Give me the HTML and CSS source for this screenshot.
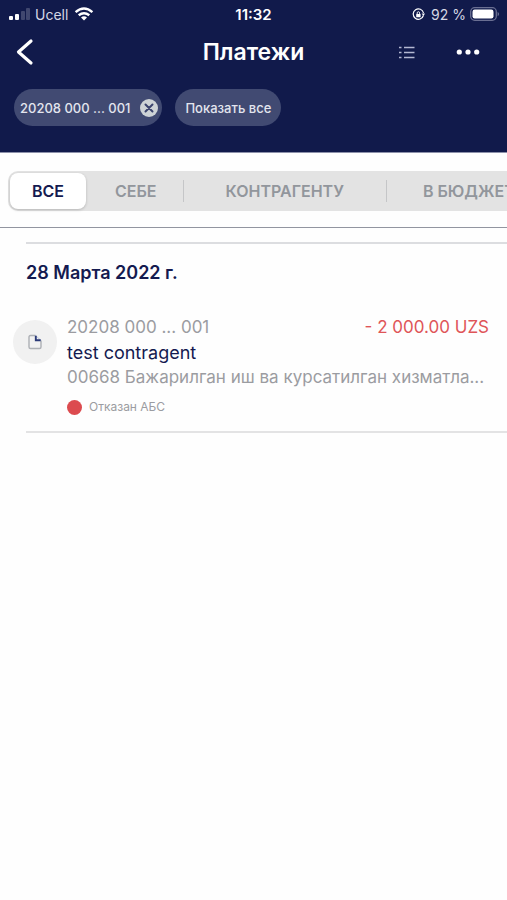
FILE: index.html
```html
<!DOCTYPE html>
<html lang="ru">
<head>
<meta charset="utf-8">
<meta name="viewport" content="width=device-width, initial-scale=1">
<title>Платежи</title>
<link rel="stylesheet" href="styles.css">
</head>
<body>
<header class="header">
  <div class="status">
    <div class="status-left">
      <svg width="22" height="12" viewBox="0 0 22 12" fill="#fff" aria-hidden="true">
        <rect x="0" y="8" width="4" height="4" rx="1"/>
        <rect x="6" y="6" width="4" height="6" rx="1"/>
        <rect x="12" y="3" width="4" height="9" rx="1" opacity=".2"/>
        <rect x="17" y="0" width="4" height="12" rx="1" opacity=".2"/>
      </svg>
      <span>Ucell</span>
      <svg width="20" height="14" viewBox="0 0 20 14" fill="none" stroke="#fff" stroke-width="2.4" aria-hidden="true">
        <path d="M1.6 5.2Q10-2 18.400 5.200M4.700 8.300Q10 4 15.300 8.300"/>
        <path d="M7 10.400Q10 8.300 13 10.400L10 13.500Z" fill="#fff" stroke="none"/>
      </svg>
    </div>
    <time class="clock">11:32</time>
    <div class="status-right">
      <svg width="13" height="13" viewBox="0 0 13 13" fill="none" stroke="#fff" stroke-width="1.2" aria-hidden="true">
        <path d="M11.400 7.500A5.200 5.200 0 1 1 11.500 5"/>
        <path d="M9.600 5.500h3.400l-1.500 2.600z" fill="#fff" stroke="none"/>
        <rect x="4.200" y="6" width="4.400" height="3.200" rx=".5" fill="#fff" stroke="none"/>
        <path d="M5.200 6V4.900a1.200 1.200 0 0 1 2.400 0V6" stroke-width=".9"/>
      </svg>
      <span>92 %</span>
      <svg width="30" height="14" viewBox="0 0 30 14" aria-hidden="true">
        <rect x=".7" y=".7" width="25.600" height="12.600" rx="4" fill="none" stroke="#6a6f92" stroke-width="1.300"/>
        <rect x="2.500" y="2.500" width="21" height="9" rx="2.200" fill="#fff"/>
        <path d="M27.600 4.700q3 2.300 0 4.600z" fill="#6a6f92"/>
      </svg>
    </div>
  </div>
  <div class="nav">
    <div class="nav-side">
      <button class="icon-button" type="button" aria-label="Назад">
        <svg width="18" height="28" viewBox="0 0 18 28" fill="none" stroke="#fff" stroke-width="3.200" stroke-linecap="round" stroke-linejoin="round"><path d="M15 3L2.500 14L15 25"/></svg>
      </button>
    </div>
    <h1 class="title">Платежи</h1>
    <div class="nav-side nav-actions">
      <button class="icon-button" type="button" aria-label="Список">
        <svg width="16" height="14" viewBox="0 0 16 14" stroke="#b4b8d2" stroke-width="1.300"><path d="M0 2.500h2.500M5 2.500h10.500M0 7.500h2.500M5 7.500h10.500M0 12.500h2.500M5 12.500h10.500"/></svg>
      </button>
      <button class="icon-button" type="button" aria-label="Ещё">
        <svg width="24" height="6" viewBox="0 0 24 6" fill="#fff"><circle cx="3.300" cy="3" r="2.600"/><circle cx="12" cy="3" r="2.600"/><circle cx="20.700" cy="3" r="2.600"/></svg>
      </button>
    </div>
  </div>
  <div class="chips">
    <div class="chip chip-account">
      <span>20208 000 ... 001</span>
      <button class="icon-button" type="button" aria-label="Убрать фильтр">
        <svg width="18" height="18" viewBox="0 0 18 18"><circle cx="9" cy="9" r="9" fill="#ced3d6"/><path d="M5.500 5.500l7 7M12.500 5.500l-7 7" stroke="#3c446e" stroke-width="2" stroke-linecap="round"/></svg>
      </button>
    </div>
    <button class="chip chip-all" type="button">Показать все</button>
  </div>
</header>
<main>
  <nav class="filter">
    <div class="segments">
      <button class="segment active" type="button">ВСЕ</button>
      <button class="segment" type="button">СЕБЕ</button>
      <button class="segment" type="button">КОНТРАГЕНТУ</button>
      <button class="segment" type="button">В БЮДЖЕТ</button>
    </div>
  </nav>
  <section class="day">
    <h2 class="date">28 Марта 2022 г.</h2>
    <article class="payment">
      <div class="avatar">
        <svg width="14" height="16" viewBox="0 0 14 16" fill="none" aria-hidden="true">
          <path d="M7.500 1.500H2.500Q1 1.500 1 3v10q0 1.500 1.500 1.500h9Q13 14.500 13 13V6.500" stroke="#adb0b5" stroke-width="1.400"/>
          <path d="M7.500 1.500L13 6.500" stroke="#b9c6da"/>
          <path d="M7.800 1.800V6.300H12.700" stroke="#2b3a78" stroke-width="1.900"/>
        </svg>
      </div>
      <div class="details">
        <div class="row"><span class="muted">20208 000 ... 001</span><span class="amount">- 2 000.00 UZS</span></div>
        <div class="name">test contragent</div>
        <div class="purpose muted">00668 Бажарилган иш ва курсатилган хизматла...</div>
        <div class="state"><span class="dot"></span>Отказан АБС</div>
      </div>
    </article>
  </section>
</main>
</body>
</html>
```
FILE: styles.css
```css
* { box-sizing: border-box; }
body {
  margin: 0;
  background: #fefefe;
  color: #141a50;
  font-family: Inter, "Liberation Sans", sans-serif;
  font-size: 17px;
  overflow-x: hidden;
}
svg { display: block; flex: none; }
button {
  margin: 0;
  padding: 0;
  border: 0;
  background: none;
  color: inherit;
  font: inherit;
}
.icon-button { display: flex; }
.header {
  background: #111a4b;
  color: #fff;
  padding-bottom: 26px;
  border-bottom: 1px solid #8d91aa;
}
.status {
  display: grid;
  grid-template-columns: 1fr auto 1fr;
  align-items: center;
  height: 28px;
  padding: 0 7px;
  font-size: 14px;
}
.status-left, .status-right { display: flex; align-items: center; gap: 4px; color: #d5d7e4; }
.status-left { padding-left: 2px; }
.status-left span { padding-right: 2px; }
.status-right { justify-content: flex-end; }
.status-right span { padding-left: 2px; }
.clock { font-size: 15px; font-weight: 600; }
.nav {
  display: grid;
  grid-template-columns: 1fr auto 1fr;
  align-items: center;
  height: 48px;
  padding: 0 16px;
}
.nav-actions { display: flex; justify-content: flex-end; align-items: center; gap: 41px; padding-right: 11px; }
.title { margin: 0; font-size: 23px; line-height: 28px; font-weight: 600; }
.chips { display: flex; gap: 13px; padding: 13px 14px 0; font-size: 13px; font-weight: 500; color: #e3e5ee; }
.chip {
  display: flex;
  align-items: center;
  height: 37px;
  border-radius: 19px;
  background: #414a72;
}
.chip-account { gap: 10px; padding: 0 4px 0 6px; }
.chip-all { padding: 0 10px; }
.filter { padding: 18px 0 16px 8px; border-bottom: 1px solid #9295a0; overflow: hidden; }
.segments {
  display: flex;
  width: max-content;
  height: 40px;
  padding: 2px;
  border-radius: 10px;
  background: #e3e3e3;
  color: #92969c;
  font-size: 16px;
  font-weight: 600;
}
.segment { display: flex; align-items: center; padding-left: 42px; }
.segment::after { content: ""; width: 1px; height: 22px; margin-left: 42px; background: #c5c6c8; }
.segment:last-child { padding-left: 36px; }
.segment.active {
  padding: 0 22px;
  border-radius: 8px;
  background: #fff;
  color: #141a50;
  box-shadow: 0 1px 3px #0003;
}
.segment.active::after { display: none; }
.segment.active + .segment { padding-left: 29px; }
.segment.active + .segment::after { margin-left: 26px; }
.day { margin: 14px 0 0 26px; border-top: 2px solid #dcdde0; border-bottom: 2px solid #e3e3e4; }
.date { margin: 17px 0 0; font-size: 18px; line-height: 24px; font-weight: 600; }
.payment { display: flex; gap: 10px; margin: 30px 18px 14px -13px; }
.avatar {
  display: flex;
  flex: none;
  align-items: center;
  justify-content: center;
  width: 44px;
  height: 44px;
  margin-top: 5px;
  border-radius: 50%;
  background: #f1f1f1;
}
.details { flex: 1; min-width: 0; line-height: 25px; }
.row { display: flex; justify-content: space-between; }
.muted { color: #9b9ca1; }
.amount { color: #df5558; }
.name { font-size: 18px; }
.purpose { overflow: hidden; text-overflow: ellipsis; white-space: nowrap; }
.state { display: flex; align-items: center; gap: 7px; margin-top: 7px; font-size: 12px; line-height: 20px; color: #9b9ca1; }
.dot { width: 15px; height: 15px; border-radius: 50%; background: #dc4b4f; }
```
